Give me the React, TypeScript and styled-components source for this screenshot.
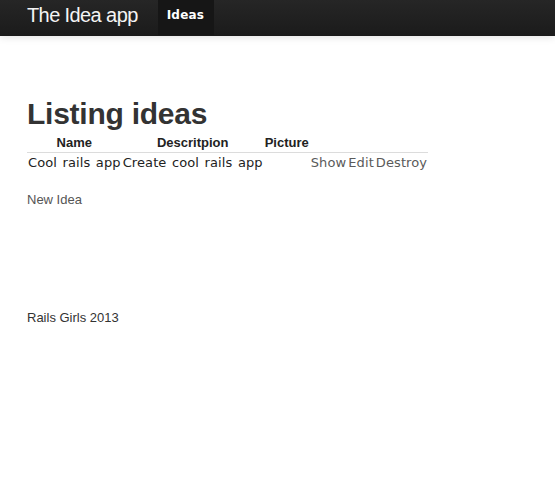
import React from "react";
import styled, { createGlobalStyle } from "styled-components";

const Global = createGlobalStyle`
  html, body { margin: 0; padding: 0; background: #fff; }
  body {
    font-family: "Liberation Sans", Arial, sans-serif;
    font-size: 13px;
    line-height: 20px;
    color: #333;
  }
`;

const Navbar = styled.nav`
  height: 35px;
  display: flex;
  align-items: stretch;
  padding-left: 27px;
  background: linear-gradient(to bottom, #262626, #1b1b1b);
  border-bottom: 1px solid #1a1a1a;
  box-shadow: 0 1px 8px rgba(0, 0, 0, 0.12);
`;

const Brand = styled.a`
  display: flex;
  align-items: center;
  padding-bottom: 6px;
  font-family: "Liberation Sans", Arial, sans-serif;
  font-size: 20px;
  letter-spacing: -0.6px;
  color: #f4f4f4;
  text-decoration: none;
  margin-right: 20px;
`;

const NavItem = styled.a<{ $active?: boolean }>`
  display: flex;
  align-items: center;
  padding: 0 10px 5px 9px;
  font-family: "DejaVu Sans", Verdana, sans-serif;
  font-weight: bold;
  font-size: 12px;
  letter-spacing: 0.2px;
  color: #fff;
  text-decoration: none;
  background: ${(p) => (p.$active ? "#161616" : "transparent")};
`;

const Container = styled.main`
  padding: 0 27px;
`;

const Title = styled.h1`
  margin: 57px 0 0;
  font-size: 30px;
  line-height: 41px;
  letter-spacing: -0.25px;
  font-weight: bold;
  color: #333;
`;

const Table = styled.table`
  border-collapse: collapse;
  border-spacing: 0;
`;

const Head = styled.th`
  padding: 1px;
  font-family: "Liberation Sans", Arial, sans-serif;
  font-size: 13px;
  font-weight: bold;
  line-height: 16px;
  color: #222;
  text-align: center;
  border-bottom: 1px solid #dcdcdc;
`;

const Cell = styled.td`
  padding: 1px;
  font-family: "DejaVu Sans", Verdana, sans-serif;
  font-size: 13px;
  line-height: 18px;
  letter-spacing: 0.1px;
  word-spacing: 1.3px;
  color: #222;
  white-space: nowrap;
`;

const Action = styled.a`
  color: #5a5a5a;
  text-decoration: none;
`;

const NewLink = styled.a`
  display: block;
  margin-top: 17px;
  color: #555;
  text-decoration: none;
`;

const Footer = styled.footer`
  margin-top: 98px;
  color: #333;
`;

export default function App() {
  return (
    <>
      <Global />
      <Navbar>
        <Brand href="#">The Idea app</Brand>
        <NavItem href="#" $active>
          Ideas
        </NavItem>
      </Navbar>
      <Container>
        <Title>Listing ideas</Title>
        <Table>
          <thead>
            <tr>
              <Head>Name</Head>
              <Head>Descritpion</Head>
              <Head>Picture</Head>
              <Head></Head>
              <Head></Head>
              <Head></Head>
            </tr>
          </thead>
          <tbody>
            <tr>
              <Cell>Cool rails app</Cell>
              <Cell>Create cool rails app</Cell>
              <Cell></Cell>
              <Cell>
                <Action href="#">Show</Action>
              </Cell>
              <Cell>
                <Action href="#">Edit</Action>
              </Cell>
              <Cell>
                <Action href="#">Destroy</Action>
              </Cell>
            </tr>
          </tbody>
        </Table>
        <NewLink href="#">New Idea</NewLink>
        <Footer>Rails Girls 2013</Footer>
      </Container>
    </>
  );
}
